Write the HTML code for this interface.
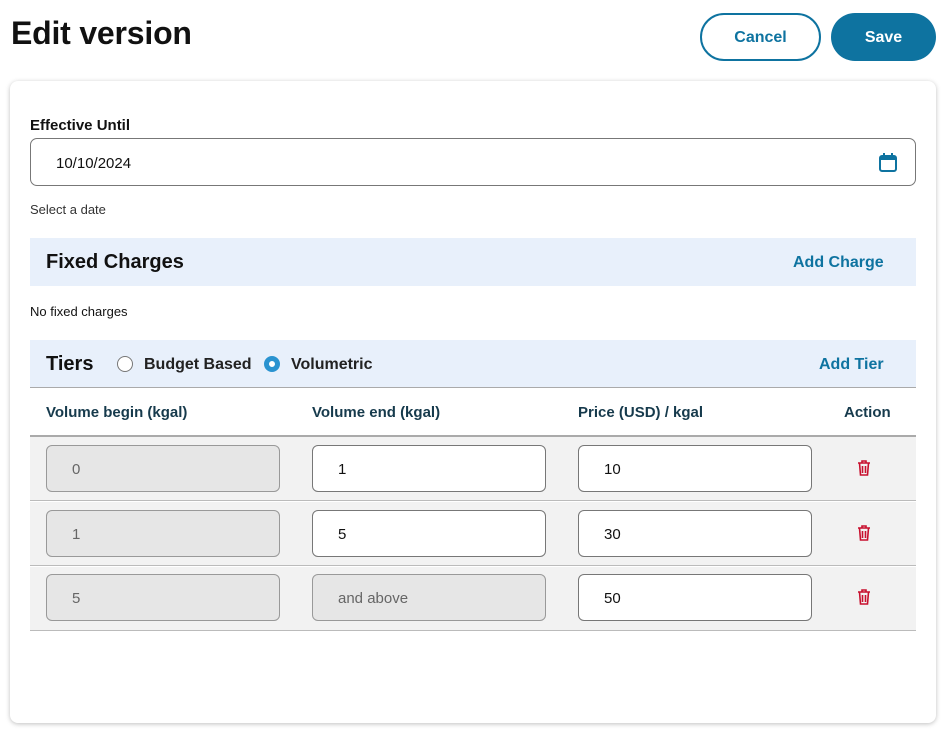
<!DOCTYPE html>
<html><head><style>
*{box-sizing:border-box;margin:0;padding:0}
body{width:949px;height:750px;background:#fff;font-family:"Liberation Sans",Arial,sans-serif;position:relative;overflow:hidden;color:#111}
.abs{position:absolute}
h1{position:absolute;left:11px;top:15px;font-size:32px;font-weight:bold;letter-spacing:-0.2px}
.btn{position:absolute;top:13px;height:48px;border-radius:24px;font-size:16px;font-weight:bold;display:flex;align-items:center;justify-content:center;padding-top:2px}
.card{position:absolute;left:10px;top:81px;width:926px;height:642px;background:#fff;border-radius:8px;box-shadow:0 1px 5px rgba(0,0,0,.25)}
.band{position:absolute;left:30px;width:886px;background:#e8f0fb}
.inp{position:absolute;height:47px;border:1px solid #777;border-radius:6px;background:#fff;font-size:15px;display:flex;align-items:center;padding-left:25px;padding-top:2px}
.dis{background:#e6e6e6;color:#666;border-color:#999}
.row{position:absolute;left:30px;width:886px;height:64px;background:#f2f2f2;border-bottom:1px solid #bbb}
.th{position:absolute;top:404px;font-size:15px;font-weight:bold;color:#163a4c}
</style></head><body>
<h1>Edit version</h1>
<div class="btn" style="left:700px;width:121px;border:2px solid #0e73a0;color:#0e73a0">Cancel</div>
<div class="btn" style="left:831px;width:105px;background:#0e73a0;color:#fff">Save</div>
<div class="card"></div>
<div class="abs" style="left:30px;top:117px;font-size:15px;font-weight:bold">Effective Until</div>
<div class="inp" style="left:30px;top:138px;width:886px;height:48px;border-radius:7px">10/10/2024</div>
<svg class="abs" style="left:878px;top:152px" width="20" height="21" viewBox="0 0 20 21"><rect x="2" y="4" width="16" height="15" rx="2" fill="none" stroke="#0e73a0" stroke-width="2"/><rect x="2" y="4" width="16" height="4" fill="#0e73a0"/><rect x="5" y="1" width="2" height="4" fill="#0e73a0"/><rect x="13" y="1" width="2" height="4" fill="#0e73a0"/></svg>
<div class="abs" style="left:30px;top:202px;font-size:13px;color:#333">Select a date</div>
<div class="band" style="top:238px;height:48px"></div>
<div class="abs" style="left:46px;top:251px;font-size:20px;font-weight:bold">Fixed Charges</div>
<div class="abs" style="left:793px;top:254px;font-size:16px;font-weight:bold;color:#0e73a0">Add Charge</div>
<div class="abs" style="left:30px;top:304px;font-size:13px">No fixed charges</div>
<div class="band" style="top:340px;height:48px;border-bottom:1px solid #aaa"></div>
<div class="abs" style="left:46px;top:353px;font-size:20px;font-weight:bold">Tiers</div>
<div class="abs" style="left:117px;top:356px;width:16px;height:16px;border:1.5px solid #777;border-radius:50%;background:#fff"></div>
<div class="abs" style="left:144px;top:356px;font-size:16px;font-weight:bold;color:#222">Budget Based</div>
<div class="abs" style="left:264px;top:356px;width:16px;height:16px;border:5px solid #2a93d0;border-radius:50%;background:#fff"></div>
<div class="abs" style="left:291px;top:356px;font-size:16px;font-weight:bold;color:#222">Volumetric</div>
<div class="abs" style="left:819px;top:356px;font-size:16px;font-weight:bold;color:#0e73a0">Add Tier</div>
<div class="th" style="left:46px">Volume begin (kgal)</div>
<div class="th" style="left:312px">Volume end (kgal)</div>
<div class="th" style="left:578px">Price (USD) / kgal</div>
<div class="th" style="left:844px">Action</div>
<div class="abs" style="left:30px;top:435px;width:886px;height:2px;background:#aaa"></div>
<div class="row" style="top:437px"></div>
<div class="row" style="top:502px"></div>
<div class="row" style="top:567px"></div>
<div class="inp dis" style="left:46px;top:445px;width:234px">0</div>
<div class="inp" style="left:312px;top:445px;width:234px">1</div>
<div class="inp" style="left:578px;top:445px;width:234px">10</div>
<div class="inp dis" style="left:46px;top:510px;width:234px">1</div>
<div class="inp" style="left:312px;top:510px;width:234px">5</div>
<div class="inp" style="left:578px;top:510px;width:234px">30</div>
<div class="inp dis" style="left:46px;top:574px;width:234px">5</div>
<div class="inp dis" style="left:312px;top:574px;width:234px">and above</div>
<div class="inp" style="left:578px;top:574px;width:234px">50</div>
<svg class="abs" style="left:856px;top:459px" width="16" height="18" viewBox="0 0 16 18"><g fill="none" stroke="#c8102e" stroke-width="1.6"><path d="M2 4h12M6 4V2h4v2M3.5 4l1 12h7l1-12M6.5 7v7M9.5 7v7"/></g></svg>
<svg class="abs" style="left:856px;top:524px" width="16" height="18" viewBox="0 0 16 18"><g fill="none" stroke="#c8102e" stroke-width="1.6"><path d="M2 4h12M6 4V2h4v2M3.5 4l1 12h7l1-12M6.5 7v7M9.5 7v7"/></g></svg>
<svg class="abs" style="left:856px;top:588px" width="16" height="18" viewBox="0 0 16 18"><g fill="none" stroke="#c8102e" stroke-width="1.6"><path d="M2 4h12M6 4V2h4v2M3.5 4l1 12h7l1-12M6.5 7v7M9.5 7v7"/></g></svg>
</body></html>
